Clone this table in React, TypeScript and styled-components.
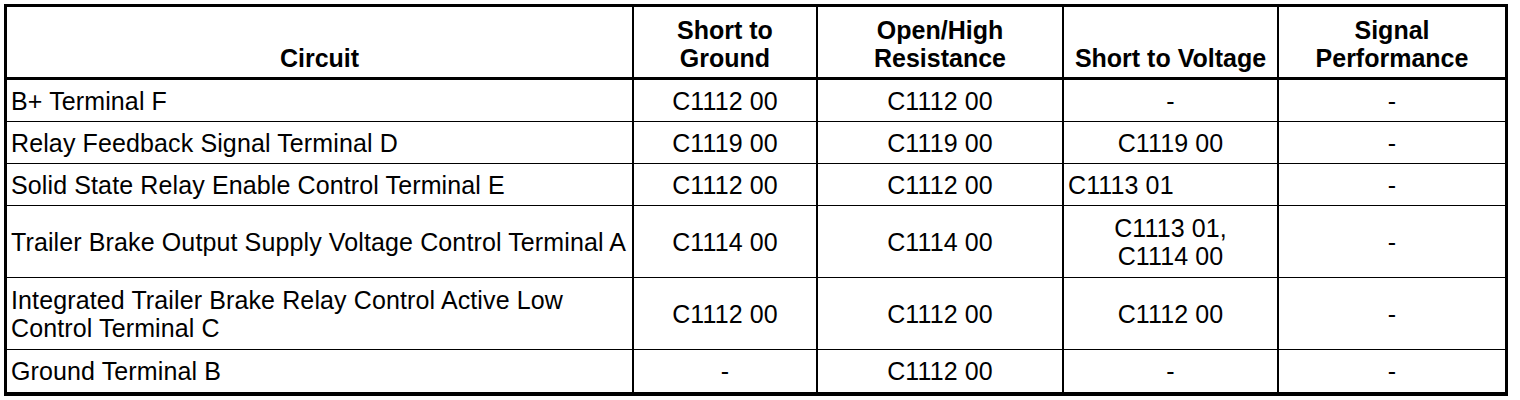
import React from 'react';
import styled, { createGlobalStyle } from 'styled-components';

const GlobalStyle = createGlobalStyle`
  html, body {
    margin: 0;
    padding: 0;
    background: #fff;
  }
  body {
    font-family: "Liberation Sans", Arial, Helvetica, sans-serif;
    color: #000;
  }
`;

type Row = {
  circuit: string;
  ground: string;
  open: string;
  voltage: string[];
  voltageLeft?: boolean;
  signal: string;
  tall?: boolean;
};

const rows: Row[] = [
  { circuit: 'B+ Terminal F', ground: 'C1112 00', open: 'C1112 00', voltage: ['-'], signal: '-' },
  { circuit: 'Relay Feedback Signal Terminal D', ground: 'C1119 00', open: 'C1119 00', voltage: ['C1119 00'], signal: '-' },
  { circuit: 'Solid State Relay Enable Control Terminal E', ground: 'C1112 00', open: 'C1112 00', voltage: ['C1113 01'], voltageLeft: true, signal: '-' },
  { circuit: 'Trailer Brake Output Supply Voltage Control Terminal A', ground: 'C1114 00', open: 'C1114 00', voltage: ['C1113 01,', 'C1114 00'], signal: '-', tall: true },
  { circuit: 'Integrated Trailer Brake Relay Control Active Low Control Terminal C', ground: 'C1112 00', open: 'C1112 00', voltage: ['C1112 00'], signal: '-', tall: true },
  { circuit: 'Ground Terminal B', ground: '-', open: 'C1112 00', voltage: ['-'], signal: '-' },
];

function App() {
  return (
    <>
      <GlobalStyle />
      <Table>
        <colgroup>
          <col style={{ width: 627 }} />
          <col style={{ width: 184 }} />
          <col style={{ width: 246 }} />
          <col style={{ width: 215 }} />
          <col style={{ width: 226 }} />
        </colgroup>
        <thead>
          <HeadRow>
            <Th>Circuit</Th>
            <Th>Short to<br />Ground</Th>
            <Th>Open/High<br />Resistance</Th>
            <Th>Short to Voltage</Th>
            <Th $last>Signal<br />Performance</Th>
          </HeadRow>
        </thead>
        <tbody>
          {rows.map((r, i) => (
            <BodyRow key={r.circuit} $tall={r.tall} $lastRow={i === rows.length - 1}>
              <Td $align="left">{r.circuit}</Td>
              <Td>{r.ground}</Td>
              <Td>{r.open}</Td>
              <Td $align={r.voltageLeft ? 'left' : 'center'}>
                {r.voltage.map((v, j) => (
                  <React.Fragment key={v}>
                    {j > 0 && <br />}
                    {v}
                  </React.Fragment>
                ))}
              </Td>
              <Td $last>{r.signal}</Td>
            </BodyRow>
          ))}
        </tbody>
      </Table>
    </>
  );
}

const Table = styled.table`
  margin: 4px;
  width: 1504px;
  table-layout: fixed;
  border-collapse: separate;
  border-spacing: 0;
  border: 3px solid #000;
  border-bottom-width: 4px;
  font-size: 25px;
  line-height: 28px;
`;

const HeadRow = styled.tr`
  height: 73px;
`;

const Th = styled.th<{ $last?: boolean }>`
  font-weight: bold;
  text-align: center;
  vertical-align: bottom;
  padding: 0 4px 5px;
  border-right: ${(p) => (p.$last ? 'none' : '2px solid #000')};
  border-bottom: 3px solid #000;
`;

const BodyRow = styled.tr<{ $tall?: boolean; $lastRow?: boolean }>`
  height: ${(p) => (p.$tall ? 72 : 42)}px;

  td {
    border-bottom: ${(p) => (p.$lastRow ? 'none' : '1.5px solid #000')};
  }
`;

const Td = styled.td<{ $align?: 'left' | 'center'; $last?: boolean }>`
  text-align: ${(p) => p.$align ?? 'center'};
  vertical-align: middle;
  padding: 0 4px;
  letter-spacing: 0.12px;
  border-right: ${(p) => (p.$last ? 'none' : '2px solid #000')};
`;

export default App;
